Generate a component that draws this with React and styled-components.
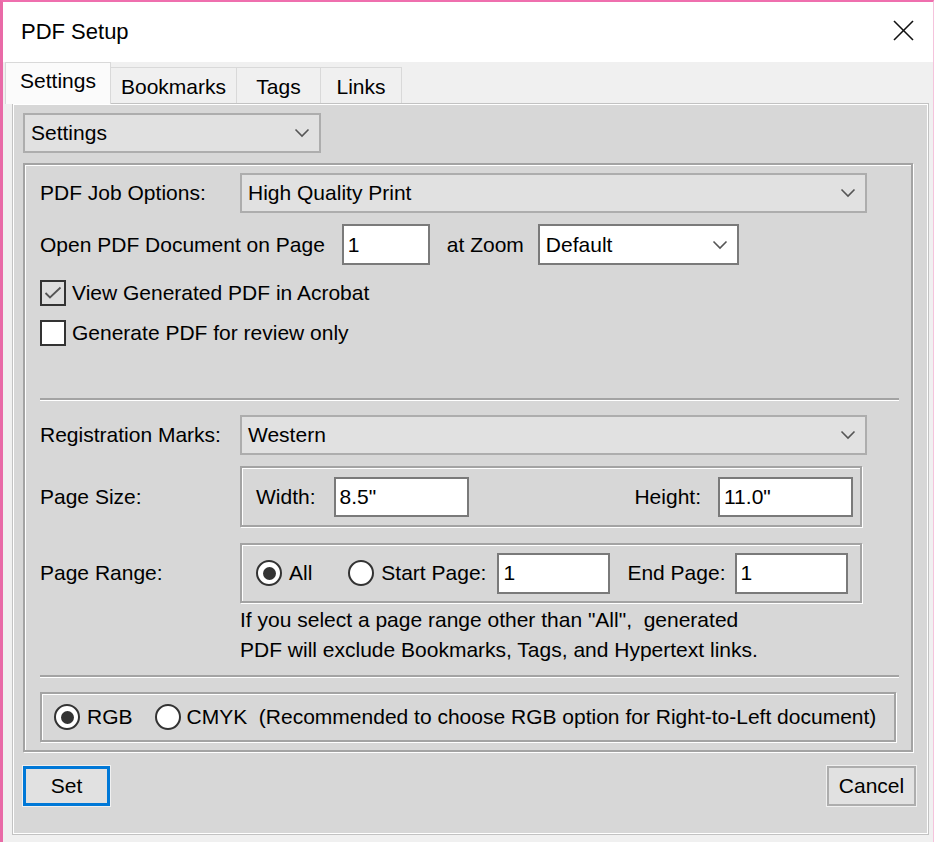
import React from 'react';
import styled, { createGlobalStyle } from 'styled-components';

const GlobalStyle = createGlobalStyle`
  html, body { margin: 0; padding: 0; background: #f0f0f0; }
  body { font-family: "Liberation Sans", Arial, sans-serif; }
  *, *::before, *::after { box-sizing: border-box; }
`;

const Window = styled.div`
  width: 934px;
  height: 842px;
  background: #f0f0f0;
  border-top: 2px solid #ef6fae;
  border-left: 3px solid #e96aa7;
  border-right: 1px solid #f5c3dc;
  display: flex;
  flex-direction: column;
  font-family: "Liberation Sans", Arial, sans-serif;
  font-size: 21px;
  color: #000;
  overflow: hidden;
`;

const TitleBar = styled.div`
  height: 60px;
  flex: none;
  background: #fff;
  display: flex;
  justify-content: space-between;
  align-items: flex-start;
  padding: 17px 19px 0 18px;
`;

const Title = styled.div`
  font-size: 22px;
  line-height: 26px;
`;

const CloseIcon = styled.svg`
  width: 21px;
  height: 21px;
  margin-top: 1px;
`;

const TabStrip = styled.div`
  height: 41px;
  flex: none;
  display: flex;
  align-items: flex-end;
  padding-left: 2px;
  position: relative;
  z-index: 1;
`;

const Tab = styled.div`
  width: ${(p) => p.$w}px;
  height: ${(p) => (p.$active ? 42 : 36)}px;
  margin-bottom: ${(p) => (p.$active ? -1 : 0)}px;
  background: ${(p) => (p.$active ? '#fbfbfb' : '#f0f0f0')};
  border: 1px solid #d9d9d9;
  border-bottom: none;
  ${(p) => (p.$active ? '' : 'border-left: none;')}
  text-align: center;
  line-height: 24px;
  padding-top: ${(p) => (p.$active ? 6 : 7)}px;
`;

const Panel = styled.div`
  margin-left: 9px;
  width: 917px;
  height: 732px;
  flex: none;
  background: #d7d7d7;
  border: 1px solid #c2c2c2;
  box-shadow: inset 1px 1px 0 #fff, inset -1px -1px 0 #fff;
  padding: 9px 0 0 10px;
  display: flex;
  flex-direction: column;
`;

const Combo = styled.div`
  width: ${(p) => p.$w}px;
  height: ${(p) => p.$h || 40}px;
  margin-left: ${(p) => p.$ml || 0}px;
  flex: none;
  background: ${(p) => (p.$white ? '#fff' : '#e1e1e1')};
  border: 2px solid ${(p) => (p.$white ? '#7a7a7a' : '#adadad')};
  display: flex;
  align-items: center;
  justify-content: space-between;
  padding: 0 9px 0 6px;
  white-space: nowrap;
`;

const Chevron = styled.svg`
  width: 16px;
  height: 10px;
  flex: none;
`;

const MainGroup = styled.div`
  margin-top: 10px;
  width: 890px;
  height: 589px;
  flex: none;
  border: 2px solid #a3a3a3;
  box-shadow: inset 1px 1px 0 #fff, 1px 1px 0 #fff;
  padding: 8px 0 0 15px;
  display: flex;
  flex-direction: column;
`;

const FormRow = styled.div`
  display: grid;
  grid-template-columns: 200px auto;
  align-items: center;
  margin-top: ${(p) => p.$mt || 0}px;
  justify-content: start;
`;

const Line = styled.div`
  display: flex;
  align-items: center;
  margin-top: ${(p) => p.$mt || 0}px;
  white-space: pre;
`;

const Label = styled.span`
  white-space: pre;
  margin-left: ${(p) => p.$ml || 0}px;
  ${(p) => (p.$push ? 'margin-left: auto;' : '')}
`;

const TextBox = styled.div`
  width: ${(p) => p.$w}px;
  height: ${(p) => p.$h || 41}px;
  flex: none;
  background: #fff;
  border: 2px solid #7a7a7a;
  display: flex;
  align-items: center;
  padding-left: 4px;
  margin-left: ${(p) => p.$ml || 0}px;
`;

const CheckBox = styled.span`
  width: 26px;
  height: 26px;
  flex: none;
  border: 2px solid #333;
  background: ${(p) => (p.$checked ? '#dedede' : '#fff')};
  display: flex;
  align-items: center;
  justify-content: center;
  margin-right: 6px;
`;

const Separator = styled.div`
  width: 859px;
  height: 3px;
  border-top: 2px solid #a3a3a3;
  border-bottom: 1px solid #fff;
  margin-top: ${(p) => p.$mt || 0}px;
`;

const Frame = styled.div`
  width: ${(p) => p.$w}px;
  height: ${(p) => p.$h}px;
  border: 2px solid #a3a3a3;
  box-shadow: inset 1px 1px 0 #fff, 1px 1px 0 #fff;
  display: flex;
  align-items: center;
  padding: 0 7px 0 ${(p) => p.$pl}px;
  margin-top: ${(p) => p.$mt || 0}px;
  white-space: pre;
`;

const RadioOption = styled.span`
  display: inline-flex;
  align-items: center;
  gap: ${(p) => p.$gap || 7}px;
  margin-left: ${(p) => p.$ml || 0}px;
  white-space: pre;
`;

const RadioCircle = styled.span`
  width: 26px;
  height: 26px;
  flex: none;
  border-radius: 50%;
  border: 2px solid #333;
  background: #fff;
  display: flex;
  align-items: center;
  justify-content: center;
  &::after {
    content: '';
    width: 13px;
    height: 13px;
    border-radius: 50%;
    background: ${(p) => (p.$checked ? '#333' : 'transparent')};
  }
`;

const Note = styled.div`
  margin: 2px 0 0 200px;
  line-height: 30px;
  white-space: pre;
`;

const ButtonRow = styled.div`
  margin-top: 14px;
  width: 893px;
  display: flex;
  justify-content: space-between;
`;

const Button = styled.div`
  width: ${(p) => p.$w}px;
  height: 40px;
  background: #e1e1e1;
  border: ${(p) => (p.$default ? '3px solid #0078d7' : '2px solid #adadad')};
  outline: 1px solid #f0f0f0;
  display: flex;
  align-items: center;
  justify-content: center;
`;

const ChevronDown = () => (
  <Chevron viewBox="0 0 16 10">
    <polyline points="1.5,1.5 8,8 14.5,1.5" fill="none" stroke="#555" strokeWidth="1.6" />
  </Chevron>
);

const Radio = ({ checked, label, ml, gap }) => (
  <RadioOption $ml={ml} $gap={gap}>
    <RadioCircle $checked={checked} />
    {label}
  </RadioOption>
);

export default function App() {
  return (
    <>
      <GlobalStyle />
      <Window>
        <TitleBar>
          <Title>PDF Setup</Title>
          <CloseIcon viewBox="0 0 21 21">
            <line x1="1" y1="1" x2="20" y2="20" stroke="#111" strokeWidth="1.6" />
            <line x1="20" y1="1" x2="1" y2="20" stroke="#111" strokeWidth="1.6" />
          </CloseIcon>
        </TitleBar>
        <TabStrip>
          <Tab $active $w={106}>Settings</Tab>
          <Tab $w={126}>Bookmarks</Tab>
          <Tab $w={84}>Tags</Tab>
          <Tab $w={81}>Links</Tab>
        </TabStrip>
        <Panel>
          <Combo $w={298}>
            <span>Settings</span>
            <ChevronDown />
          </Combo>
          <MainGroup>
            <FormRow>
              <Label>PDF Job Options:</Label>
              <Combo $w={627}>
                <span>High Quality Print</span>
                <ChevronDown />
              </Combo>
            </FormRow>
            <Line $mt={11}>
              <Label>Open PDF Document on Page</Label>
              <TextBox $w={88} $ml={17}>1</TextBox>
              <Label $ml={17}>at Zoom</Label>
              <Combo $w={201} $h={41} $ml={14} $white>
                <span>Default</span>
                <ChevronDown />
              </Combo>
            </Line>
            <Line $mt={15}>
              <CheckBox $checked>
                <svg width="18" height="14" viewBox="0 0 18 14">
                  <polyline points="1.5,7 6,11.5 16.5,1.5" fill="none" stroke="#555" strokeWidth="1.8" />
                </svg>
              </CheckBox>
              View Generated PDF in Acrobat
            </Line>
            <Line $mt={14}>
              <CheckBox />
              Generate PDF for review only
            </Line>
            <Separator $mt={52} />
            <FormRow $mt={14}>
              <Label>Registration Marks:</Label>
              <Combo $w={627}>
                <span>Western</span>
                <ChevronDown />
              </Combo>
            </FormRow>
            <FormRow $mt={11}>
              <Label>Page Size:</Label>
              <Frame $w={622} $h={61} $pl={14}>
                <Label>Width:</Label>
                <TextBox $w={135} $h={40} $ml={18}>8.5"</TextBox>
                <Label $push>Height:</Label>
                <TextBox $w={135} $h={40} $ml={17}>11.0"</TextBox>
              </Frame>
            </FormRow>
            <FormRow $mt={16}>
              <Label>Page Range:</Label>
              <Frame $w={622} $h={60} $pl={14}>
                <Radio checked label="All" />
                <Radio label="Start Page:" ml={36} />
                <TextBox $w={113} $ml={11}>1</TextBox>
                <Label $ml={17}>End Page:</Label>
                <TextBox $w={113} $ml={9}>1</TextBox>
              </Frame>
            </FormRow>
            <Note>
              {'If you select a page range other than "All",  generated\nPDF will exclude Bookmarks, Tags, and Hypertext links.'}
            </Note>
            <Separator $mt={10} />
            <Frame $w={856} $h={50} $pl={12} $mt={14}>
              <Radio checked label="RGB" />
              <Radio label="CMYK  (Recommended to choose RGB option for Right-to-Left document)" ml={22} gap={6} />
            </Frame>
          </MainGroup>
          <ButtonRow>
            <Button $default $w={87}>Set</Button>
            <Button $w={89}>Cancel</Button>
          </ButtonRow>
        </Panel>
      </Window>
    </>
  );
}
